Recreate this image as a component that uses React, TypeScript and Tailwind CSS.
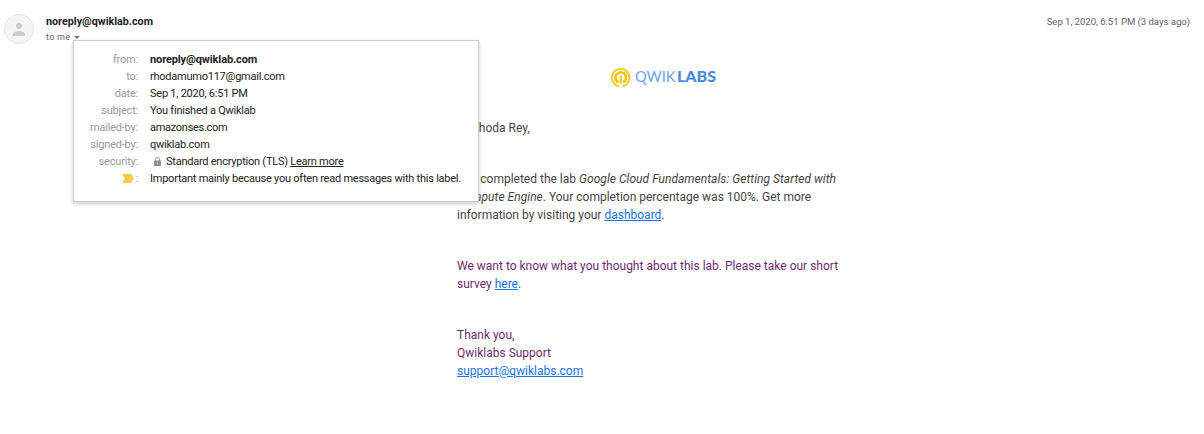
import type { ReactNode } from "react";

function Row({ label, children }: { label: ReactNode; children: ReactNode }) {
  return (
    <div className="flex h-[17px] whitespace-nowrap">
      <dt className="flex w-[64px] items-center justify-end tracking-[-0.2px] text-[#999]">{label}</dt>
      <dd className="ml-3 flex items-center text-[#222]">{children}</dd>
    </div>
  );
}

function DetailsCard() {
  return (
    <dl className="absolute left-[73px] top-[40px] h-[162px] w-[406px] border border-[#ccc] bg-white pt-[10px] text-[11px] leading-[17px] tracking-[-0.24px] shadow-[0_2px_4px_rgba(0,0,0,0.2)]">
      <Row label="from:">
        <b className="font-bold tracking-[-0.12px]">noreply@qwiklab.com</b>
      </Row>
      <Row label="to:">rhodamumo117@gmail.com</Row>
      <Row label="date:">Sep 1, 2020, 6:51 PM</Row>
      <Row label="subject:">You finished a Qwiklab</Row>
      <Row label="mailed-by:"><span className="tracking-[-0.28px]">amazonses.com</span></Row>
      <Row label="signed-by:">qwiklab.com</Row>
      <Row label="security:">
        <svg className="ml-[4px] mr-[5px] h-[9px] w-[7px]" viewBox="0 0 7 9">
          <path d="M1.5 4V2.5a2 2 0 0 1 4 0V4" fill="none" stroke="#999" strokeWidth="1" />
          <rect y="3.5" width="7" height="5.5" rx=".6" fill="#8c8c8c" />
          <circle cx="3.5" cy="6.2" r=".8" fill="#ddd" />
        </svg>
        <span>
          Standard encryption (TLS) <a className="underline">Learn more</a>
        </span>
      </Row>
      <Row
        label={
          <>
            <svg className="mr-[2px] h-[9px] w-[12px]" viewBox="0 0 12 9">
              <path d="M0 0h8.2q.7 0 1.1.6L12 4.5 9.300 8.400q-.4.6-1.100.6H0l2.800-4.500z" fill="#f7cb4d" />
            </svg>
            :
          </>
        }
      >
        Important mainly because you often read messages with this label.
      </Row>
    </dl>
  );
}

function Logo() {
  return (
    <svg className="block h-[22px] w-[108px]" viewBox="0 0 108 22">
      <path d="M8.800 20.100A8.700 8.700 0 1 1 12.600 20.100" fill="none" stroke="#f8d030" strokeWidth="2.300" />
      <path d="M8.500 16.400A5.300 5.300 0 1 1 13.100 16.400" fill="none" stroke="#f2c51c" strokeWidth="2.900" />
      <path d="M10.800 9.500V17.500" stroke="#f2c51c" strokeWidth="2.200" />
      <text x="25" y="16" fontSize="14.500" textLength="40.500" lengthAdjust="spacingAndGlyphs" fill="#6fa3e8" fontFamily="Lato, sans-serif">
        QWIK
      </text>
      <text x="67" y="16" fontSize="14.500" textLength="39" lengthAdjust="spacingAndGlyphs" fill="#4a8ae0" fontFamily="Lato, sans-serif" fontWeight="900">
        LABS
      </text>
    </svg>
  );
}

export default function App() {
  return (
    <div className="relative h-[434px] w-[1204px] overflow-hidden bg-white font-[Roboto,sans-serif]">
      <header className="flex h-[60px] pl-1 pr-[14px] pt-[14px]">
        <div className="flex h-[30px] w-[30px] items-center justify-center rounded-full border border-[#e4e4e4] bg-[#f5f5f5]">
          <svg className="mt-px h-[13px] w-[12px]" viewBox="0 0 12 13" fill="#ccc">
            <circle cx="6" cy="3" r="3" />
            <path d="M0 13v-2C0 9 4 8 6 8s6 1 6 3v2z" />
          </svg>
        </div>
        <div className="ml-3 text-[#202124]">
          <div className="h-4 text-[10.750px] font-bold leading-[15px]">noreply@qwiklab.com</div>
          <div className="flex items-center text-[9px] leading-[15px] tracking-[0.3px] text-[#5f6368]">
            to me
            <svg className="ml-[4px] h-[3px] w-[6px]" viewBox="0 0 6 3">
              <path d="M0 0h6L3 3z" fill="#777" />
            </svg>
          </div>
        </div>
        <div className="ml-auto text-[9.600px] leading-[16px] tracking-[-0.04px] text-[#5f6368]">
          Sep 1, 2020, 6:51 PM (3 days ago)
        </div>
      </header>

      <main className="ml-[457px] w-[400px] whitespace-nowrap text-[12px] leading-[18px] text-[#444]">
        <div className="ml-[153px] mt-[6px] h-[53px]">
          <Logo />
        </div>
        <p>Hi Rhoda Rey,</p>
        <p className="mt-[33px]">
          You completed the lab{" "}
          <i className="tracking-[0.035px]">
            Google Cloud Fundamentals: Getting Started with
            <br />
            Compute Engine
          </i>
          . Your completion percentage was 100%. Get more
          <br />
          information by visiting your <a className="text-[#1a73e8] underline">dashboard</a>.
        </p>
        <p className="mt-[33px] text-[#702c70]">
          We want to know what you thought about this lab. Please take our short
          <br />
          survey <a className="text-[#1a73e8] underline">here</a>.
        </p>
        <p className="mt-[33px] text-[#702c70]">
          Thank you,
          <br />
          Qwiklabs Support
          <br />
          <a className="text-[#1a73e8] underline">support@qwiklabs.com</a>
        </p>
      </main>

      <DetailsCard />
    </div>
  );
}
